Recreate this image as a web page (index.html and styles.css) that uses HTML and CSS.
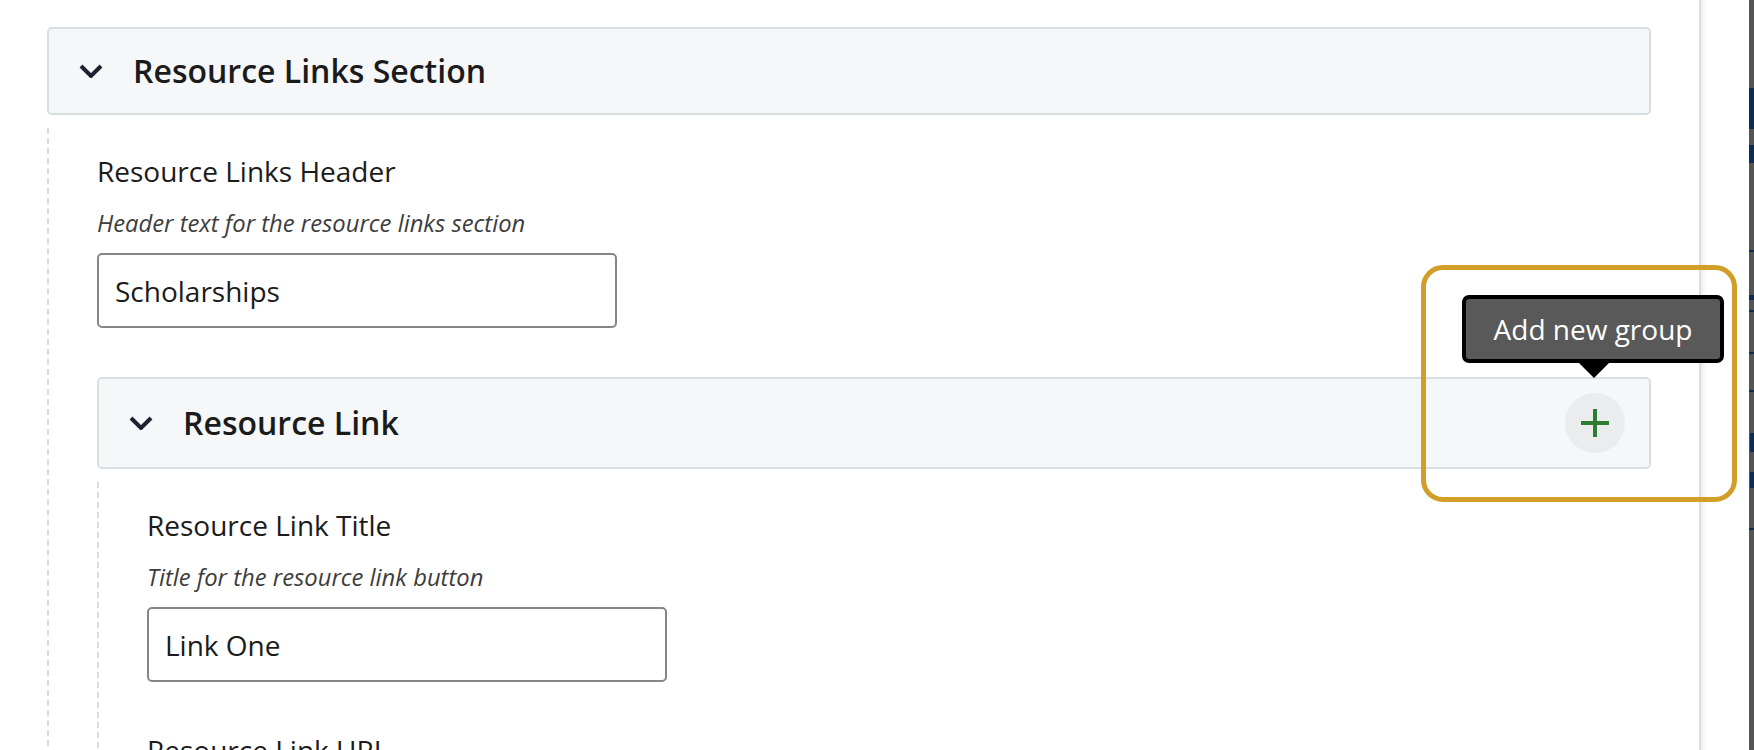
FILE: index.html
```html
<!DOCTYPE html>
<html lang="en">
<head>
    <meta charset="UTF-8">
    <title>Resource Links Section</title>
    <link rel="stylesheet" href="styles.css">
</head>
<body>
    <div class="page">
        <main class="editor">
            <!-- Resource Links Section -->
            <div class="group-head">
                <svg class="chevron" viewBox="0 0 24 14"><path d="M2 2 L12 12 L22 2"/></svg>
                <h2>Resource Links Section</h2>
            </div>
            <div class="group-body">
                <div class="field">
                    <label>Resource Links Header</label>
                    <p class="hint">Header text for the resource links section</p>
                    <input class="text-input" type="text" value="Scholarships">
                </div>

                <!-- Resource Link -->
                <div class="group-head group-head-sub">
                    <svg class="chevron" viewBox="0 0 24 14"><path d="M2 2 L12 12 L22 2"/></svg>
                    <h2>Resource Link</h2>
                    <button class="add-btn">
                        <svg viewBox="0 0 28 28"><path d="M14 0 V28 M0 14 H28"/></svg>
                    </button>
                </div>
                <div class="group-body">
                    <div class="field">
                        <label>Resource Link Title</label>
                        <p class="hint">Title for the resource link button</p>
                        <input class="text-input" type="text" value="Link One">
                    </div>
                    <div class="field">
                        <label>Resource Link URL</label>
                    </div>
                </div>
            </div>
        </main>
        <div class="gutter"></div>
        <div class="backdrop">
            <span class="mark mark-a"></span>
            <span class="mark mark-b"></span>
            <span class="mark mark-c"></span>
            <span class="mark mark-d"></span>
            <span class="mark mark-e"></span>
            <span class="mark mark-f"></span>
            <span class="mark mark-g"></span>
            <span class="mark mark-h"></span>
            <span class="mark mark-i"></span>
            <span class="mark mark-j"></span>
        </div>
    </div>

    <!-- annotation over the screenshot -->
    <div class="tooltip">Add new group</div>
    <div class="highlight"></div>
</body>
</html>
```
FILE: styles.css
```css
html, body {
    margin: 0;
    height: 100%;
    overflow: hidden;
}
body {
    font-family: "Open Sans", "Noto Sans", sans-serif;
    color: #1b1b1b;
    background: #fff;
}
.page {
    display: flex;
    height: 750px;
    overflow: hidden;
}
.editor {
    width: 1699px;
    padding: 27px 48px 0 47px;
    box-sizing: border-box;
    flex-shrink: 0;
}
.group-head {
    display: flex;
    align-items: center;
    height: 88px;
    box-sizing: border-box;
    padding: 0 24px 0 30px;
    background: #f5f7f9;
    border: 2px solid #d8dfe3;
    border-radius: 5px;
}
.group-head-sub {
    height: 92px;
}
.group-head h2 {
    margin: -2px 0 0 30px;
    font-size: 32px;
    font-weight: 600;
    color: #1b1b1b;
}
.chevron {
    width: 24px;
    height: 14px;
    flex-shrink: 0;
}
.chevron path {
    fill: none;
    stroke: #1c2230;
    stroke-width: 4;
}
.group-body {
    margin-top: 13px;
    padding: 24px 0 200px 48px;
    border-left: 2px dashed #d8dcdf;
}
.field {
    margin-bottom: 49px;
}
.field label {
    display: block;
    font-size: 28px;
    line-height: 38px;
}
.hint {
    margin: 17px 0 14px;
    font-size: 23.8px;
    line-height: 32px;
    font-style: italic;
    color: #3d3d3d;
}
.text-input {
    display: block;
    width: 520px;
    height: 75px;
    box-sizing: border-box;
    padding: 0 16px;
    font: inherit;
    font-size: 28px;
    color: #1b1b1b;
    border: 2px solid #85858a;
    border-radius: 5px;
    background: #fff;
}
.add-btn {
    margin-left: auto;
    width: 60px;
    height: 60px;
    padding: 16px;
    border: 0;
    border-radius: 50%;
    background: #ebecee;
}
.add-btn svg {
    display: block;
    width: 28px;
    height: 28px;
}
.add-btn path {
    stroke: #2e7d32;
    stroke-width: 4;
}
.gutter {
    width: 50px;
    border-left: 2px solid #d8dde1;
    background: linear-gradient(to right, #eceef0, #fff 6px);
    flex-shrink: 0;
    box-sizing: border-box;
}
.backdrop {
    position: relative;
    flex: 1;
    background: #555;
}
.mark {
    position: absolute;
    left: 0;
    right: 0;
    height: 2px;
    background: #0c2c55;
}
.mark-a { top: 88px; height: 41px; }
.mark-b { top: 145px; height: 18px; }
.mark-c { top: 250px; }
.mark-d { top: 295px; height: 5px; }
.mark-e { top: 310px; }
.mark-f { top: 352px; }
.mark-g { top: 390px; }
.mark-h { top: 433px; height: 19px; left: 1px; }
.mark-i { top: 472px; height: 16px; left: 1px; }
.mark-j { top: 528px; }
.tooltip {
    position: absolute;
    left: 1462px;
    top: 295px;
    width: 262px;
    height: 68px;
    box-sizing: border-box;
    display: flex;
    align-items: center;
    justify-content: center;
    font-size: 28px;
    color: #fff;
    background: #595959;
    border: 4px solid #000;
    border-radius: 7px;
}
.tooltip::after {
    content: "";
    position: absolute;
    left: 112px;
    top: 63px;
    width: 0;
    height: 0;
    border-left: 16px solid transparent;
    border-right: 16px solid transparent;
    border-top: 16px solid #000;
}
.highlight {
    position: absolute;
    left: 1421px;
    top: 265px;
    width: 316px;
    height: 237px;
    box-sizing: border-box;
    border: 5px solid #d19f27;
    border-radius: 22px;
}
```
